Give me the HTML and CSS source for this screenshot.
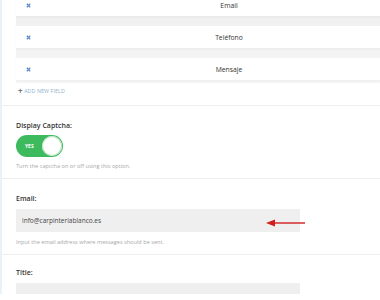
FILE: index.html
```html
<!DOCTYPE html>
<html lang="en">
<head>
  <meta charset="UTF-8" />
  <title>Contact Form Settings</title>
  <link rel="stylesheet" href="styles.css">
</head>
<body>
  <div class="page">
    <div class="field-list">
      <div class="field-row first">
        <svg class="remove" viewBox="0 0 6 6"><path d="M1 1L5 5M5 1L1 5"/></svg>
        <span class="field-name">Email</span>
      </div>
      <div class="field-row">
        <svg class="remove" viewBox="0 0 6 6"><path d="M1 1L5 5M5 1L1 5"/></svg>
        <span class="field-name">Teléfono</span>
      </div>
      <div class="field-row">
        <svg class="remove" viewBox="0 0 6 6"><path d="M1 1L5 5M5 1L1 5"/></svg>
        <span class="field-name">Mensaje</span>
      </div>
    </div>
    <a class="add-field" href="#"><span class="plus">+</span> ADD NEW FIELD</a>

    <div class="setting">
      <label class="setting-label">Display Captcha:</label>
      <div class="toggle">
        <span class="toggle-text">YES</span>
        <span class="knob"></span>
      </div>
      <p class="help">Turn the captcha on or off using this option.</p>
    </div>

    <div class="setting">
      <label class="setting-label">Email:</label>
      <div class="input-wrap">
        <div class="input">info@carpinteriablanco.es</div>
        <svg class="arrow" viewBox="0 0 40 8"><path d="M8 4H39"/><polygon points="0,4 9,0.5 9,7.5"/></svg>
      </div>
      <p class="help">Input the email address where messages should be sent.</p>
    </div>

    <div class="setting last">
      <label class="setting-label">Title:</label>
      <div class="input"></div>
    </div>
  </div>
</body>
</html>
```

FILE: styles.css
```css
html {
  overflow: hidden;
}

body {
  margin: 0;
  font-family: 'Open Sans', sans-serif;
  background: #fff;
  color: #333;
}

.page {
  width: 440px;
  height: 300px;
  border-left: 2px solid #e8f3f8;
}

.field-list {
  margin-left: 14px;
  margin-top: -6px;
  background: linear-gradient(#eeeeee, #f6f6f6);
  display: flex;
  flex-direction: column;
  gap: 10px;
  padding-bottom: 3px;
}

.field-row {
  background: #fff;
  height: 22px;
  display: grid;
  grid-template-columns: 20px 1fr 20px;
  align-items: center;
  padding: 0 10px;
  box-shadow: 0 1px 2px rgba(0,0,0,0.04);
}

.remove {
  width: 5px;
  height: 5px;
  stroke: #5f8fcf;
  stroke-width: 1.6;
}

.field-name {
  text-align: center;
  font-size: 6.8px;
  color: #333;
}

.add-field {
  display: block;
  margin: 4px 0 10px 16px;
  font-size: 5.3px;
  line-height: 8px;
  color: #8fb2cc;
  text-decoration: none;
  letter-spacing: 0.1px;
}

.plus {
  color: #777;
  font-size: 8px;
  font-weight: 700;
  vertical-align: -1px;
}

.setting {
  border-top: 1px solid #eeeeee;
  padding: 14px 14px 8px;
}

.setting.last {
  padding-bottom: 0;
  padding-top: 12px;
}

.setting-label {
  display: block;
  font-size: 7px;
  font-weight: 600;
  color: #333;
  line-height: 11px;
}

.toggle {
  margin-top: 4px;
  width: 47px;
  height: 22px;
  border-radius: 11px;
  background: #3db95e;
  display: flex;
  align-items: center;
  justify-content: space-between;
  padding: 0 1px 0 9px;
  box-sizing: border-box;
}

.toggle-text {
  color: #fff;
  font-size: 5px;
  font-weight: 700;
}

.knob {
  width: 20px;
  height: 20px;
  border-radius: 50%;
  background: #fff;
  box-shadow: inset 0 0 0 1px #b8e3c2;
}

.help {
  margin: 5px 0 0;
  font-size: 5.6px;
  color: #a8a8a8;
  line-height: 8px;
}

.input-wrap {
  position: relative;
  margin-top: 5px;
}

.input-wrap + .help {
  margin-top: 6px;
}

.input {
  width: 284px;
  height: 23px;
  background: #efefef;
  font-size: 6.5px;
  color: #444;
  line-height: 23px;
  padding-left: 6px;
  box-sizing: border-box;
}

.setting.last .input {
  margin-top: 5px;
}

.arrow {
  position: absolute;
  left: 250px;
  top: 10px;
  width: 40px;
  height: 8px;
}

.arrow path {
  stroke: #d11f1f;
  stroke-width: 1.4;
}

.arrow polygon {
  fill: #d11f1f;
}
```
